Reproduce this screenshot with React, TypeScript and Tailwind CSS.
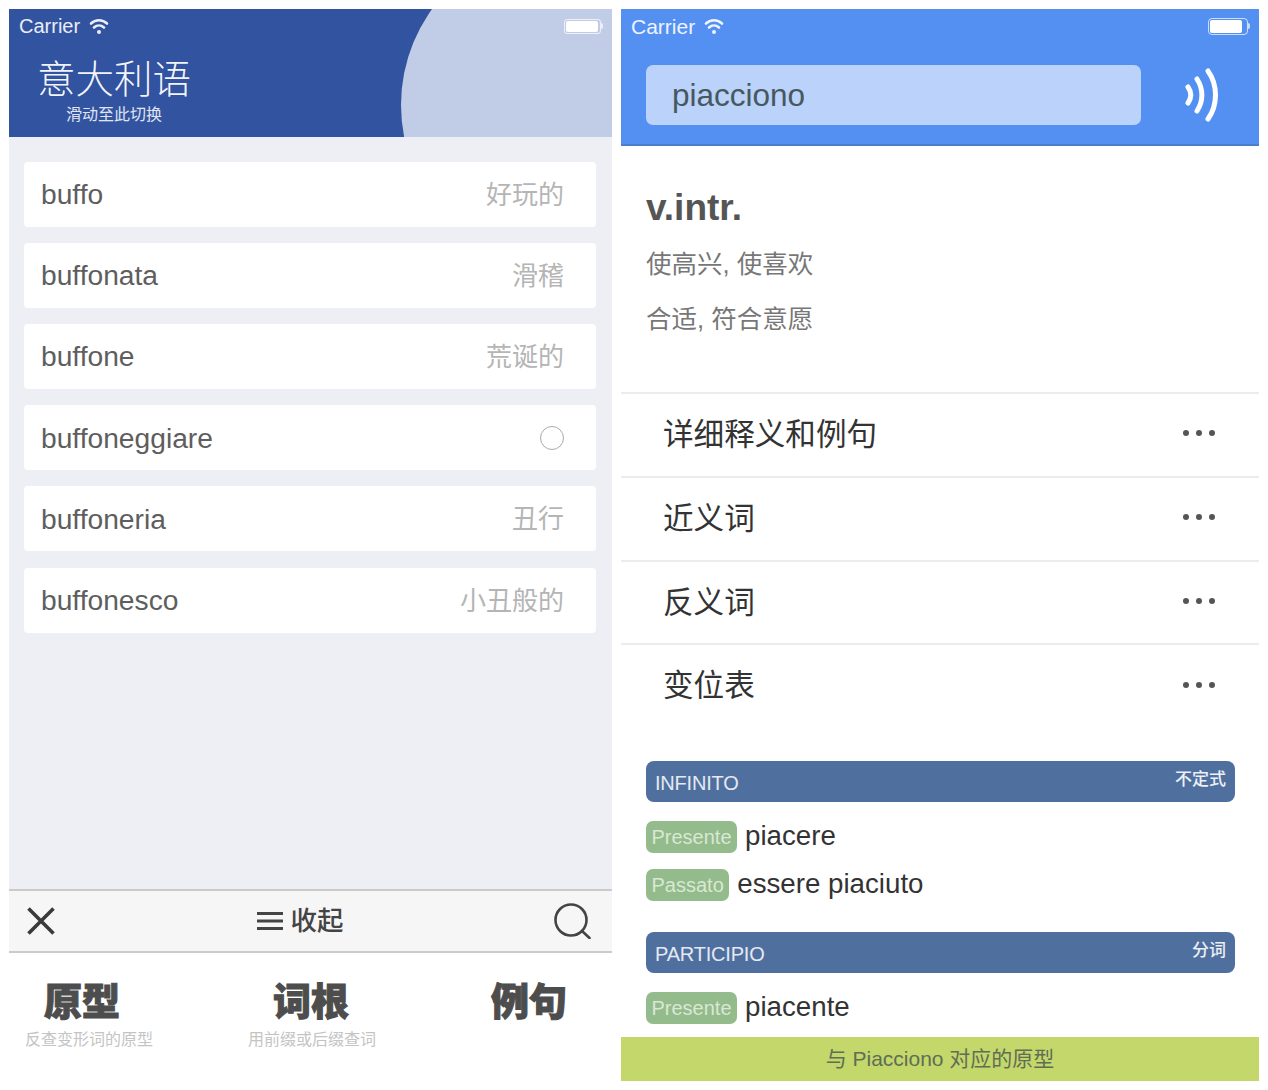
const words = [
  { it: 'buffo', zh: '好玩的' },
  { it: 'buffonata', zh: '滑稽' },
  { it: 'buffone', zh: '荒诞的' },
  { it: 'buffoneggiare', zh: '' },
  { it: 'buffoneria', zh: '丑行' },
  { it: 'buffonesco', zh: '小丑般的' },
];

const sections = ['详细释义和例句', '近义词', '反义词', '变位表'];

const sans = 'font-["Liberation_Sans","Noto_Sans_CJK_SC",sans-serif]';

function Wifi() {
  return (
    <svg width="20" height="17" viewBox="0 0 20 17" fill="none" stroke="currentColor" strokeWidth="2.6" strokeLinecap="round">
      <path d="M2 5.5C6.5 1.2 13.5 1.2 18 5.5" />
      <path d="M5 9.5c3-2.7 7-2.7 10 0" />
      <circle cx="10" cy="14" r="2" fill="currentColor" stroke="none" />
    </svg>
  );
}

function StatusBar({ large }: { large?: boolean }) {
  return (
    <div className="flex h-[34px] items-center justify-between pr-[9px] leading-none text-white/90">
      <div className="flex items-center gap-[9px]">
        <span className={large ? 'text-[21px]' : 'text-[20px]'}>Carrier</span>
        <Wifi />
      </div>
      <div className="flex items-center">
        <div className={large ? 'h-[17px] w-[40px] rounded-[4px] border border-white/70 p-[1px]' : 'h-[15px] w-[37px] rounded-[3px] border border-white/70 p-[1px]'}>
          <div className="h-full w-[32px] rounded-[2px] bg-white" />
        </div>
        <div className="h-[6px] w-[2px] rounded-r-sm bg-white/70" />
      </div>
    </div>
  );
}

function Badge({ label, word }: { label: string; word: string }) {
  return (
    <div className="flex h-[32px] items-center gap-[8px]">
      <span className="flex h-[32px] items-center rounded-[7px] bg-[#93bb8c] px-[5.5px] text-[20px] text-[#d9e8d3]">{label}</span>
      <span className="pb-[2px] text-[27.7px] leading-none text-[#333]">{word}</span>
    </div>
  );
}

function TenseHeader({ title, zh }: { title: string; zh: string }) {
  return (
    <div className="flex h-[41px] justify-between rounded-[8px] bg-[#4f6f9f] px-[9px] text-white/85">
      <span className="self-center pt-[3px] text-[20px] leading-none tracking-[-0.2px]">{title}</span>
      <span className="pt-[10px] text-[17px] font-medium leading-none text-white/90">{zh}</span>
    </div>
  );
}

function Tool({ title, sub, shift }: { title: string; sub?: string; shift?: string }) {
  return (
    <div className="w-[128px] text-center">
      <div className={`text-[38px] font-black leading-[50px] text-[#4d4d4d] [-webkit-text-stroke:1px_#4d4d4d] ${shift ?? ''}`}>{title}</div>
      {sub && <div className="mt-[3px] whitespace-nowrap text-[16px] leading-[20px] text-[#c4c4c4]">{sub}</div>}
    </div>
  );
}

export default function App() {
  return (
    <div className={`flex h-[1090px] w-[1268px] gap-[9px] overflow-hidden bg-white pl-[9px] pt-[9px] ${sans}`}>
      <div className="flex h-[1072px] w-[603px] flex-col bg-[#eeeff4]">
        <header className="relative h-[128px] shrink-0 overflow-hidden bg-[#3153a0] pl-[10px]">
          <div className="absolute left-[392px] top-[-68px] h-[328px] w-[328px] rounded-full bg-[#c1cce6]" />
          <div className="relative">
            <StatusBar />
            <div className="ml-[18px] mt-[14px] text-[38.5px] font-light leading-[46px] text-white/95">意大利语</div>
            <div className="ml-[47px] mt-[2px] text-[16px] leading-[20px] text-white/85">滑动至此切换</div>
          </div>
        </header>

        <div className="flex flex-1 flex-col gap-[16.2px] pl-[15px] pr-[16px] pt-[24.6px]">
          {words.map((w) => (
            <div key={w.it} className="flex h-[65px] items-center justify-between rounded-[4px] bg-white pl-[17px] pr-[32px]">
              <span className="text-[28.2px] text-[#5e5e5e]">{w.it}</span>
              {w.zh ? (
                <span className="pt-[2px] text-[26px] text-[#b5b5b5]">{w.zh}</span>
              ) : (
                <span className="h-[24px] w-[24px] rounded-full border border-[#aaa]" />
              )}
            </div>
          ))}
        </div>

        <div className="flex h-[64px] shrink-0 items-center justify-between border-y-2 border-[#cbcbcb] bg-[#f6f6f6] pl-[17px] pr-[21px]">
          <svg width="30" height="30" viewBox="0 0 30 30" fill="none" stroke="#3a3a3a" strokeWidth="3.6">
            <path d="M2.5 2.5l25 25M27.5 2.5l-25 25" />
          </svg>
          <div className="flex items-center gap-[8px] pr-[10px] text-[26.5px] font-medium leading-none text-[#444]">
            <svg width="26" height="20" viewBox="0 0 26 20" fill="#444">
              <rect y="1" width="26" height="3" />
              <rect y="8.5" width="26" height="3" />
              <rect y="16" width="26" height="3" />
            </svg>
            <span>收起</span>
          </div>
          <svg width="37" height="36" viewBox="0 0 37 36" fill="none" stroke="#444" strokeWidth="2.6" strokeLinecap="round">
            <circle cx="17" cy="17" r="15.5" />
            <path d="M28 28l7.5 7" />
          </svg>
        </div>

        <div className="flex h-[128px] shrink-0 bg-white pl-[16px] pt-[24px]">
          <Tool title="原型" sub="反查变形词的原型" shift="pr-[14px]" />
          <div className="ml-[95px]">
            <Tool title="词根" sub="用前缀或后缀查词" shift="pr-[2px]" />
          </div>
          <div className="ml-[88px]">
            <Tool title="例句" shift="pl-[2px]" />
          </div>
        </div>
      </div>

      <div className="flex h-[1072px] w-[638px] flex-col bg-white">
        <header className="h-[137px] shrink-0 border-b-2 border-[#4a7fc9] bg-[#5490f2] pl-[10px]">
          <StatusBar large />
          <div className="mt-[22px] flex items-center">
            <div className="ml-[15px] flex h-[60px] w-[495px] items-center rounded-[7px] bg-[#bbd2fa] pl-[26px] pt-[2px] text-[31.5px] text-[#46595f]">
              piacciono
            </div>
            <svg className="ml-[43px]" width="38" height="54" viewBox="0 0 38 54" fill="none" stroke="white" strokeWidth="5" strokeLinecap="round">
              <path d="M4 19c3.5 5 3.5 11 0 16" />
              <path d="M13 11c6.5 10 6.5 22 0 32" />
              <path d="M24 3c10 14 10 34 0 48" />
            </svg>
          </div>
        </header>

        <div className="px-[25px] pt-[37px]">
          <div className="text-[37px] font-bold leading-[50px] text-[#555]">v.intr.</div>
          <div className="mt-[12px] text-[25.5px] leading-[38px] text-[#777]">使高兴, 使喜欢</div>
          <div className="mt-[17px] text-[25.5px] leading-[38px] text-[#777]">合适, 符合意愿</div>
        </div>

        <div className="mt-[54px]">
          {sections.map((s) => (
            <div key={s} className="flex h-[83.8px] items-center justify-between border-t-2 border-[#ececec] pl-[42px] pr-[44px]">
              <span className="text-[30.6px] text-[#333]">{s}</span>
              <div className="mb-[3px] flex gap-[7px]">
                <span className="h-[6px] w-[6px] rounded-full bg-[#555]" />
                <span className="h-[6px] w-[6px] rounded-full bg-[#555]" />
                <span className="h-[6px] w-[6px] rounded-full bg-[#555]" />
              </div>
            </div>
          ))}
        </div>

        <div className="min-h-0 flex-1 overflow-hidden pl-[25px] pr-[24px] pt-[33.6px]">
          <TenseHeader title="INFINITO" zh="不定式" />
          <div className="mt-[19px] flex flex-col gap-[16px]">
            <Badge label="Presente" word="piacere" />
            <Badge label="Passato" word="essere piaciuto" />
          </div>
          <div className="mt-[31px]">
            <TenseHeader title="PARTICIPIO" zh="分词" />
          </div>
          <div className="mt-[19px]">
            <Badge label="Presente" word="piacente" />
          </div>
        </div>

        <div className="flex h-[44px] shrink-0 items-center justify-center bg-[#c4d76b] text-[21px] text-[#5f6e55]">
          与 Piacciono 对应的原型
        </div>
      </div>
    </div>
  );
}
